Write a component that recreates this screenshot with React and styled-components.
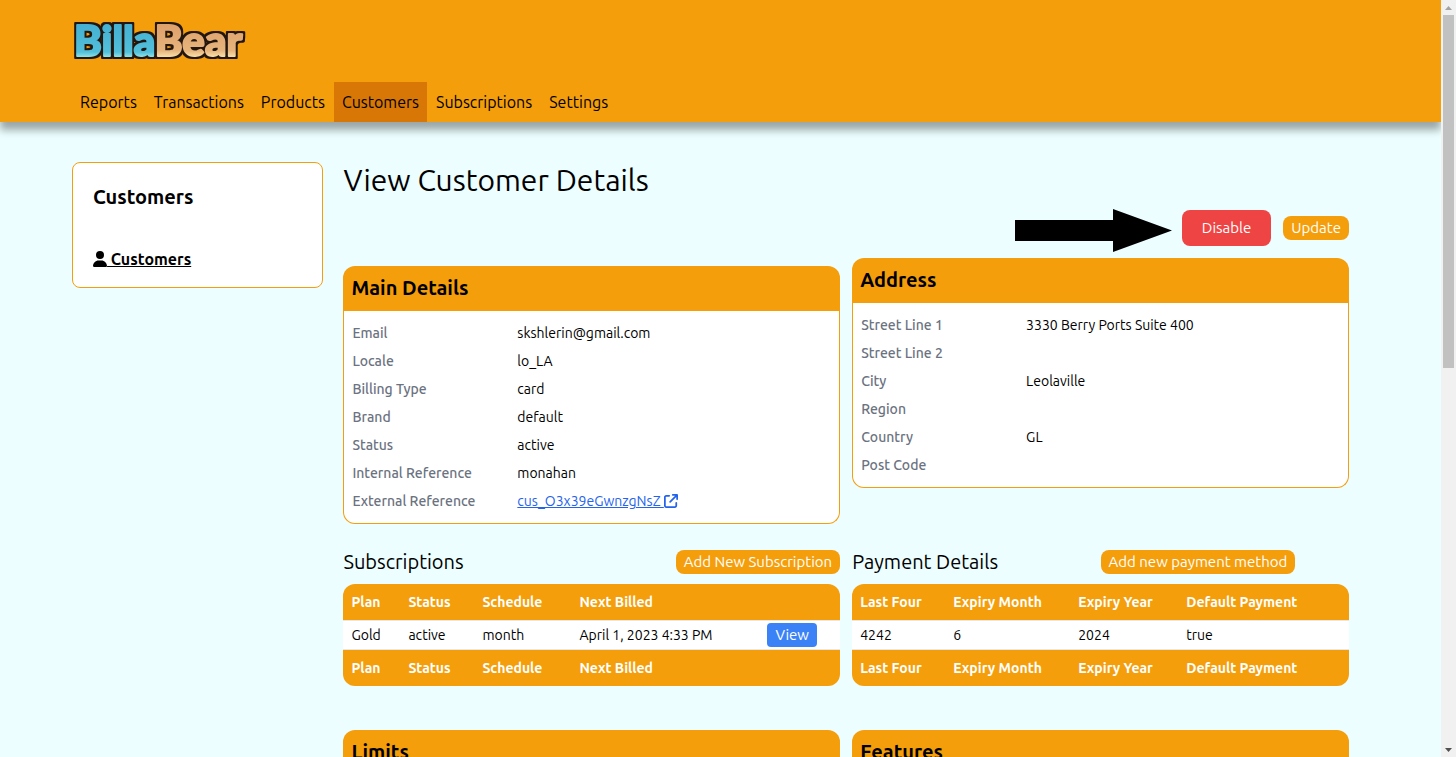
import styled, { createGlobalStyle, css } from 'styled-components';
import { FaUser, FaArrowUpRightFromSquare } from 'react-icons/fa6';

const GlobalStyle = createGlobalStyle`
  *, *::before, *::after {
    box-sizing: border-box;
  }
  body {
    margin: 0;
    background-color: #ecfeff;
    color: #000;
    font-family: Ubuntu, "Noto Sans", sans-serif;
    font-size: 16px;
    line-height: 24px;
  }
  h1, h2, h3, dl, dd {
    margin: 0;
  }
  a {
    color: inherit;
  }
`;

const Window = styled.div`
  display: grid;
  grid-template-columns: minmax(0, 1fr) 15px;
  height: 100vh;
  overflow: hidden;
`;

const Page = styled.div`
  overflow: hidden;
`;

const Scrollbar = styled.div`
  display: flex;
  flex-direction: column;
  background-color: #f1f1f1;
`;

const ScrollArrow = styled.svg`
  flex: none;
  width: 15px;
  height: 15px;
`;

const Thumb = styled.div`
  flex: 17;
  margin: 0 2px;
  background-color: #c1c1c1;
`;

const Track = styled.div`
  flex: 18;
`;

const Header = styled.header`
  padding: 8px 5% 0;
  background-color: #f59e0b;
  box-shadow: 0 8px 8px rgba(0, 0, 0, 0.35);
`;

const Logo = styled.svg`
  display: block;
  width: 180px;
  height: 66px;
  margin-bottom: 8px;
`;

const Nav = styled.nav`
  display: flex;
  gap: 1px;
`;

const NavLink = styled.a`
  padding: 8px;
  text-decoration: none;
  background-color: ${(props) => (props.$active ? '#d97706' : 'transparent')};
`;

const Body = styled.div`
  display: grid;
  grid-template-columns: minmax(0, 1fr) minmax(0, 4fr);
  align-items: start;
  gap: 20px;
  margin: 40px 5% 0;
  padding-right: 20px;
`;

const Sidebar = styled.aside`
  padding: 20px 20px 16px;
  border: 1px solid #f59e0b;
  border-radius: 8px;
  background-color: #fff;
`;

const SidebarTitle = styled.h2`
  margin-bottom: 36px;
  font-size: 20px;
  line-height: 28px;
  font-weight: 700;
`;

const SidebarLink = styled.a`
  display: block;
  font-weight: 700;

  svg {
    width: 14px;
    height: 16px;
    vertical-align: -2px;
  }
`;

const PageTitle = styled.h1`
  font-size: 30px;
  line-height: 36px;
  font-weight: 400;
`;

const Actions = styled.div`
  display: flex;
  justify-content: flex-end;
  align-items: center;
  gap: 12px;
  margin: 12px 0;
`;

const Arrow = styled.svg`
  align-self: flex-start;
  width: 157px;
  height: 43px;
  margin: -1px -2px -6px 0;
`;

const Button = styled.button`
  border: 0;
  border-radius: 8px;
  padding: 2px 8px;
  background-color: #f59e0b;
  color: #fff;
  font: inherit;
  font-size: 15px;
  line-height: 20px;
  cursor: pointer;
  ${(props) => props.$variant === 'danger' && css`
    padding: 8px 20px;
    background-color: #ef4444;
  `}
  ${(props) => props.$variant === 'view' && css`
    border-radius: 4px;
    background-color: #3b82f6;
  `}
`;

const Columns = styled.div`
  display: grid;
  grid-template-columns: repeat(2, minmax(0, 1fr));
  align-items: start;
  gap: 24px 12px;
`;

const Card = styled.section`
  margin-top: ${(props) => (props.$lowered ? '8px' : '0')};
`;

const CardTitle = styled.h2`
  padding: 8px 8px 9px;
  border-radius: 12px 12px 0 0;
  background-color: #f59e0b;
  font-size: 20px;
  line-height: 28px;
  font-weight: 700;
`;

const Details = styled.dl`
  padding: 8px;
  border: 1px solid #f59e0b;
  border-top: 0;
  border-radius: 0 0 12px 12px;
  background-color: #fff;
  font-size: 14px;
  line-height: 28px;
`;

const DetailRow = styled.div`
  display: grid;
  grid-template-columns: 1fr 2fr;
  gap: 8px;
  min-height: 28px;

  dt {
    color: #6b7280;
    font-weight: 500;
  }
`;

const ExternalLink = styled.a`
  color: #2563eb;

  svg {
    width: 14px;
    height: 14px;
    vertical-align: -2px;
  }
`;

const ListSection = styled.section`
  padding-bottom: 20px;
`;

const ListHeader = styled.div`
  display: grid;
  grid-template-columns: repeat(2, 1fr);
  align-items: center;
  margin-bottom: 8px;

  h3 {
    font-size: 20px;
    line-height: 28px;
    font-weight: 400;
  }
  button {
    justify-self: ${(props) => props.$buttonAlign};
  }
`;

const Table = styled.table`
  width: 100%;
  table-layout: fixed;
  border-collapse: separate;
  border-spacing: 0;
  border-radius: 12px;
  overflow: hidden;
  background-color: #f59e0b;
  font-size: 14px;
  line-height: 20px;
  text-align: left;

  th {
    padding: 8px;
    color: #fff;
    font-weight: 700;
  }
  td {
    padding: 2px 8px;
    border-top: 1px solid #e5e7eb;
    border-bottom: 1px solid #e5e7eb;
    background-color: #fff;
    height: 30px;
  }
  button {
    display: block;
  }
`;

const mainDetails = [
  ['Email', 'skshlerin@gmail.com'],
  ['Locale', 'lo_LA'],
  ['Billing Type', 'card'],
  ['Brand', 'default'],
  ['Status', 'active'],
  ['Internal Reference', 'monahan'],
  ['External Reference', (
    <ExternalLink href="#stripe">cus_O3x39eGwnzgNsZ <FaArrowUpRightFromSquare /></ExternalLink>
  )],
];

const address = [
  ['Street Line 1', '3330 Berry Ports Suite 400'],
  ['Street Line 2', ''],
  ['City', 'Leolaville'],
  ['Region', ''],
  ['Country', 'GL'],
  ['Post Code', ''],
];

const navItems = ['Reports', 'Transactions', 'Products', 'Customers', 'Subscriptions', 'Settings'];

function BillaBearLogo() {
  return (
    <Logo viewBox="0 0 180 66" role="img" aria-label="BillaBear">
      <defs>
        <linearGradient id="blue" gradientUnits="userSpaceOnUse" x1="0" y1="16" x2="0" y2="49">
          <stop offset="0" stopColor="#45b0d2" />
          <stop offset="0.85" stopColor="#52bfda" />
          <stop offset="1" stopColor="#8fe3e6" />
        </linearGradient>
        <linearGradient id="tan" gradientUnits="userSpaceOnUse" x1="0" y1="16" x2="0" y2="49">
          <stop offset="0" stopColor="#dfa06a" />
          <stop offset="0.8" stopColor="#e6b47c" />
          <stop offset="1" stopColor="#f8e0a8" />
        </linearGradient>
        <filter id="outline" x="-5%" y="-10%" width="110%" height="120%" colorInterpolationFilters="sRGB">
          <feMorphology in="SourceAlpha" operator="dilate" radius="2" result="grown" />
          <feFlood floodColor="#23160f" />
          <feComposite in2="grown" operator="in" />
          <feMerge>
            <feMergeNode />
            <feMergeNode in="SourceGraphic" />
          </feMerge>
        </filter>
      </defs>
      <text
        x="2"
        y="48"
        fontFamily="Lato, sans-serif"
        fontWeight="900"
        fontSize="42"
        strokeWidth="2"
        strokeLinejoin="round"
        filter="url(#outline)"
      >
        <tspan fill="url(#blue)" stroke="url(#blue)">Billa</tspan>
        <tspan fill="url(#tan)" stroke="url(#tan)">Bear</tspan>
      </text>
    </Logo>
  );
}

function DetailCard({ title, rows, lowered }) {
  return (
    <Card $lowered={lowered}>
      <CardTitle>{title}</CardTitle>
      <Details>
        {rows.map(([label, value]) => (
          <DetailRow key={label}>
            <dt>{label}</dt>
            <dd>{value}</dd>
          </DetailRow>
        ))}
      </Details>
    </Card>
  );
}

function ListTable({ widths, headings, row }) {
  const headingRow = (
    <tr>
      {headings.map((heading, i) => (heading ? <th key={i}>{heading}</th> : <th key={i} aria-label="Actions" />))}
    </tr>
  );
  return (
    <Table>
      <colgroup>
        {widths.map((width, i) => <col key={i} width={width} />)}
      </colgroup>
      <thead>{headingRow}</thead>
      <tbody>
        <tr>
          {row.map((cell, i) => <td key={i}>{cell}</td>)}
        </tr>
      </tbody>
      <tfoot>{headingRow}</tfoot>
    </Table>
  );
}

export default function App() {
  return (
    <Window>
      <GlobalStyle />
      <Page>
        <Header>
          <BillaBearLogo />
          <Nav>
            {navItems.map((item) => (
              <NavLink key={item} href="#nav" $active={item === 'Customers'}>{item}</NavLink>
            ))}
          </Nav>
        </Header>
        <Body>
          <Sidebar>
            <SidebarTitle>Customers</SidebarTitle>
            <SidebarLink href="#customers"><FaUser /> Customers</SidebarLink>
          </Sidebar>
          <main>
            <PageTitle>View Customer Details</PageTitle>
            <Actions>
              <Arrow viewBox="0 0 157 43" aria-hidden="true">
                <path d="M0 11H98V0L157 21.5L98 43V32H0Z" />
              </Arrow>
              <Button type="button" $variant="danger">Disable</Button>
              <Button type="button">Update</Button>
            </Actions>
            <Columns>
              <DetailCard title="Main Details" rows={mainDetails} lowered />
              <DetailCard title="Address" rows={address} />
              <ListSection>
                <ListHeader $buttonAlign="end">
                  <h3>Subscriptions</h3>
                  <Button type="button">Add New Subscription</Button>
                </ListHeader>
                <ListTable
                  widths={[57, 74, 97, 188, undefined]}
                  headings={['Plan', 'Status', 'Schedule', 'Next Billed', '']}
                  row={['Gold', 'active', 'month', 'April 1, 2023 4:33 PM', <Button type="button" $variant="view">View</Button>]}
                />
              </ListSection>
              <ListSection>
                <ListHeader $buttonAlign="start">
                  <h3>Payment Details</h3>
                  <Button type="button">Add new payment method</Button>
                </ListHeader>
                <ListTable
                  widths={[93, 125, 108, undefined]}
                  headings={['Last Four', 'Expiry Month', 'Expiry Year', 'Default Payment']}
                  row={['4242', '6', '2024', 'true']}
                />
              </ListSection>
              <DetailCard title="Limits" rows={[]} />
              <DetailCard title="Features" rows={[]} />
            </Columns>
          </main>
        </Body>
      </Page>
      <Scrollbar aria-hidden="true">
        <ScrollArrow viewBox="0 0 15 15"><path d="M4 10L7.5 6L11 10Z" fill="#a3a3a3" /></ScrollArrow>
        <Thumb />
        <Track />
        <ScrollArrow viewBox="0 0 15 15"><path d="M4 6L7.5 10L11 6Z" fill="#505050" /></ScrollArrow>
      </Scrollbar>
    </Window>
  );
}
